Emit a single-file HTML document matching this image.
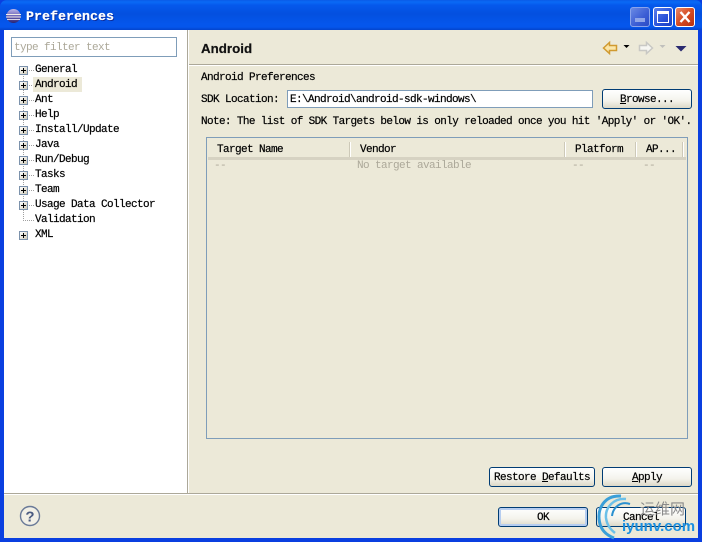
<!DOCTYPE html>
<html><head><meta charset="utf-8">
<style>
html,body{margin:0;padding:0;background:#0831d9}
#w{position:relative;width:702px;height:542px;overflow:hidden;background:#0a3fe0;font:11px/12px "Liberation Mono","Noto Sans CJK SC",monospace;letter-spacing:-.6px;color:#000;-webkit-text-stroke:.2px currentColor}
#w *{box-sizing:border-box}
.a{position:absolute}
.t{position:absolute;white-space:pre;height:12px;line-height:12px;margin-top:1px}
#bar{left:0;top:0;width:702px;height:30px;background:linear-gradient(#0a5be8 0,#0a6af5 2px,#0559ec 5px,#0450df 14px,#0556ec 24px,#0556ec 27px,#0444cc 30px);border-radius:7px 7px 0 0}
#cl{left:4px;top:30px;width:694px;height:508px;background:#ece9d8}
.btn{position:absolute;border:1px solid #003c74;border-radius:3px;background:linear-gradient(#fff,#f4f3ec 60%,#dcd8c8);text-align:center;line-height:21px;height:20px}
.btn u{text-decoration:underline}
.plus{position:absolute;left:19px;width:9px;height:9px;border:1px solid #7c92ac;background:linear-gradient(135deg,#fff,#cfcbba)}
.plus:before{content:"";position:absolute;left:1px;top:3px;width:5px;height:1px;background:#000}
.plus:after{content:"";position:absolute;left:3px;top:1px;width:1px;height:5px;background:#000}
.hd{position:absolute;top:142px;width:2px;height:15px;background:#fff;border-left:1px solid #cdc9b8}
.g{color:#aca899;-webkit-text-stroke:0}
</style></head><body>
<div id="w">
<div class="a" id="bar"></div>
<svg class="a" style="left:6px;top:8px" width="16" height="16" viewBox="0 0 16 16"><defs><linearGradient id="e" x1="0" y1="0" x2="0" y2="1"><stop offset="0" stop-color="#b9b6e8"/><stop offset=".5" stop-color="#6a63b8"/><stop offset="1" stop-color="#2a2470"/></linearGradient></defs><circle cx="7.5" cy="8" r="7" fill="url(#e)"/><rect x="0" y="6" width="15" height="1" fill="#f2eee8"/><rect x="0" y="8.5" width="15" height="1" fill="#f2eee8"/><rect x="1" y="11" width="13" height="1" fill="#d8d4e8"/></svg>
<div class="t" style="left:26px;top:10px;height:14px;line-height:14px;font-size:13.33px;font-weight:bold;letter-spacing:0;color:#fff;text-shadow:1px 1px 0 #0a2a9a">Preferences</div>

<div class="a" style="left:630px;top:7px;width:20px;height:20px;border:1px solid #8aa4ec;border-radius:3px;background:linear-gradient(135deg,#6a8ae4,#3a5cd4 60%,#2c4cc4)"></div>
<div class="a" style="left:635px;top:18px;width:10px;height:4px;background:#8fa5e8"></div>
<div class="a" style="left:653px;top:7px;width:20px;height:20px;border:1px solid #fff;border-radius:3px;background:linear-gradient(135deg,#5b80ec,#2850d8 60%,#1c40c0)"></div>
<div class="a" style="left:657px;top:11px;width:12px;height:12px;border:1px solid #fff;border-top:3px solid #fff"></div>
<div class="a" style="left:675px;top:7px;width:20px;height:20px;border:1px solid #fff;border-radius:3px;background:linear-gradient(135deg,#e88a6c,#d64c22 50%,#b83010)"></div>
<svg class="a" style="left:675px;top:7px" width="20" height="20"><path d="M5.5 5L14.5 15M14.5 5L5.5 15" stroke="#fff" stroke-width="2.4"/></svg>

<div class="a" id="cl"></div>
<div class="a" style="left:4px;top:30px;width:183px;height:463px;background:#fff"></div>
<div class="a" style="left:187px;top:30px;width:1px;height:463px;background:#aca899"></div>
<div class="a" style="left:188px;top:30px;width:1px;height:463px;background:#fff"></div>
<div class="a" style="left:4px;top:493px;width:694px;height:1px;background:#aca899"></div>
<div class="a" style="left:4px;top:494px;width:694px;height:1px;background:#fff"></div>

<div class="a" style="left:11px;top:37px;width:166px;height:20px;border:1px solid #7f9db9;background:#fff"></div>
<div class="t g" style="left:14px;top:41px">type filter text</div>

<div class="a" style="left:23px;top:70px;width:11px;height:151px;background:repeating-linear-gradient(to bottom,#a0a0a0 0,#a0a0a0 1px,transparent 1px,transparent 15px);-webkit-mask:repeating-linear-gradient(to right,#000 0,#000 1px,transparent 1px,transparent 2px)"></div>
<div class="a" style="left:23px;top:70px;width:1px;height:150px;background:repeating-linear-gradient(to bottom,#a0a0a0 0,#a0a0a0 1px,transparent 1px,transparent 2px)"></div>
<div class="a" style="left:33px;top:77px;width:49px;height:15px;background:#ece9d8"></div>
<i class="plus" style="top:66px"></i><div class="t" style="left:35px;top:63px">General</div>
<i class="plus" style="top:81px"></i><div class="t" style="left:35px;top:78px">Android</div>
<i class="plus" style="top:96px"></i><div class="t" style="left:35px;top:93px">Ant</div>
<i class="plus" style="top:111px"></i><div class="t" style="left:35px;top:108px">Help</div>
<i class="plus" style="top:126px"></i><div class="t" style="left:35px;top:123px">Install/Update</div>
<i class="plus" style="top:141px"></i><div class="t" style="left:35px;top:138px">Java</div>
<i class="plus" style="top:156px"></i><div class="t" style="left:35px;top:153px">Run/Debug</div>
<i class="plus" style="top:171px"></i><div class="t" style="left:35px;top:168px">Tasks</div>
<i class="plus" style="top:186px"></i><div class="t" style="left:35px;top:183px">Team</div>
<i class="plus" style="top:201px"></i><div class="t" style="left:35px;top:198px">Usage Data Collector</div>
<div class="t" style="left:35px;top:213px">Validation</div>
<i class="plus" style="top:231px"></i><div class="t" style="left:35px;top:228px">XML</div>

<div class="t" style="left:201px;top:41px;margin-top:0;height:15px;font:bold 13.33px/15px 'Liberation Sans',sans-serif;letter-spacing:0;color:#111">Android</div>
<div class="a" style="left:189px;top:64px;width:509px;height:1px;background:#aca899"></div>
<div class="a" style="left:189px;top:65px;width:509px;height:1px;background:#fff"></div>

<svg class="a" style="left:600px;top:38px" width="92" height="20" viewBox="0 0 92 20">
<path d="M3.5 10L9.5 4.5V7.5H16.5V12.5H9.5V15.5Z" fill="#fbe6a8" stroke="#d09a30" stroke-width="1.5"/>
<path d="M23.5 7h6l-3 3z" fill="#000"/>
<path d="M52.5 10L46.5 4.5V7.5H39.5V12.5H46.5V15.5Z" fill="#f6f6f2" stroke="#c8c8c4" stroke-width="1.5"/>
<path d="M59.5 7h6l-3 3z" fill="#c0c0bc"/>
<path d="M75.5 8h11l-5.500 5.500z" fill="#2a2a70"/>
</svg>

<div class="t" style="left:201px;top:71px">Android Preferences</div>
<div class="t" style="left:201px;top:93px">SDK Location:</div>
<div class="a" style="left:287px;top:90px;width:306px;height:18px;border:1px solid #7f9db9;background:#fff"></div>
<div class="t" style="left:290px;top:93px">E:\Android\android-sdk-windows\</div>
<div class="btn" style="left:602px;top:89px;width:90px;"><u>B</u>rowse...</div>
<div class="t" style="left:201px;top:115px;letter-spacing:-.62px">Note: The list of SDK Targets below is only reloaded once you hit 'Apply' or 'OK'.</div>

<div class="a" style="left:206px;top:137px;width:482px;height:302px;border:1px solid #7f9db9"></div>
<div class="a" style="left:208px;top:157px;width:478px;height:3px;background:#d6d2c2"></div>
<div class="hd" style="left:349px"></div><div class="hd" style="left:564px"></div><div class="hd" style="left:635px"></div><div class="hd" style="left:682px"></div>
<div class="t" style="left:217px;top:143px">Target Name</div>
<div class="t" style="left:360px;top:143px">Vendor</div>
<div class="t" style="left:575px;top:143px">Platform</div>
<div class="t" style="left:646px;top:143px">AP...</div>
<div class="t g" style="left:214px;top:159px">--</div>
<div class="t g" style="left:357px;top:159px">No target available</div>
<div class="t g" style="left:572px;top:159px">--</div>
<div class="t g" style="left:643px;top:159px">--</div>

<div class="btn" style="left:489px;top:467px;width:106px"><span>Restore <u>D</u>efaults</span></div>
<div class="btn" style="left:602px;top:467px;width:90px"><u>A</u>pply</div>

<svg class="a" style="left:19px;top:505px" width="22" height="22" viewBox="0 0 22 22"><circle cx="11" cy="11" r="9.500" fill="#f2f0e6" stroke="#6a7a98" stroke-width="1.400"/><text x="11" y="16.500" text-anchor="middle" style="font:bold 15px 'Liberation Sans',sans-serif;letter-spacing:0;-webkit-text-stroke:0" fill="#4a5a80">?</text></svg>

<div class="btn" style="left:498px;top:507px;width:90px;box-shadow:inset 0 0 0 2px #b6cdf0">OK</div>
<div class="btn" style="left:596px;top:507px;width:90px">Cancel</div>

<svg class="a" style="left:590px;top:490px" width="112" height="52" viewBox="0 0 112 52">
<path d="M31 6C14 5 7 19 9.500 32C11 40 16 45 24 48" fill="none" stroke="#3a9fd8" stroke-width="3"/>
<path d="M36 9C24 8 15 17 16 28C17 35 20 39 25 43" fill="none" stroke="#6cc0e8" stroke-width="2.500"/>
<path d="M40 14C31 11 23 17 22 26" fill="none" stroke="#2a90d0" stroke-width="2"/>
<text x="50" y="24" style="font:15px 'Noto Sans CJK SC',sans-serif;letter-spacing:0;-webkit-text-stroke:.3px #8a8a8a" fill="#8a8a8a">运维网</text>
<text x="32" y="41" style="font:bold 15px 'Liberation Sans',sans-serif;letter-spacing:0;-webkit-text-stroke:0" fill="#1a8fe0">iyunv.com</text>
</svg>
</div>
</body></html>
